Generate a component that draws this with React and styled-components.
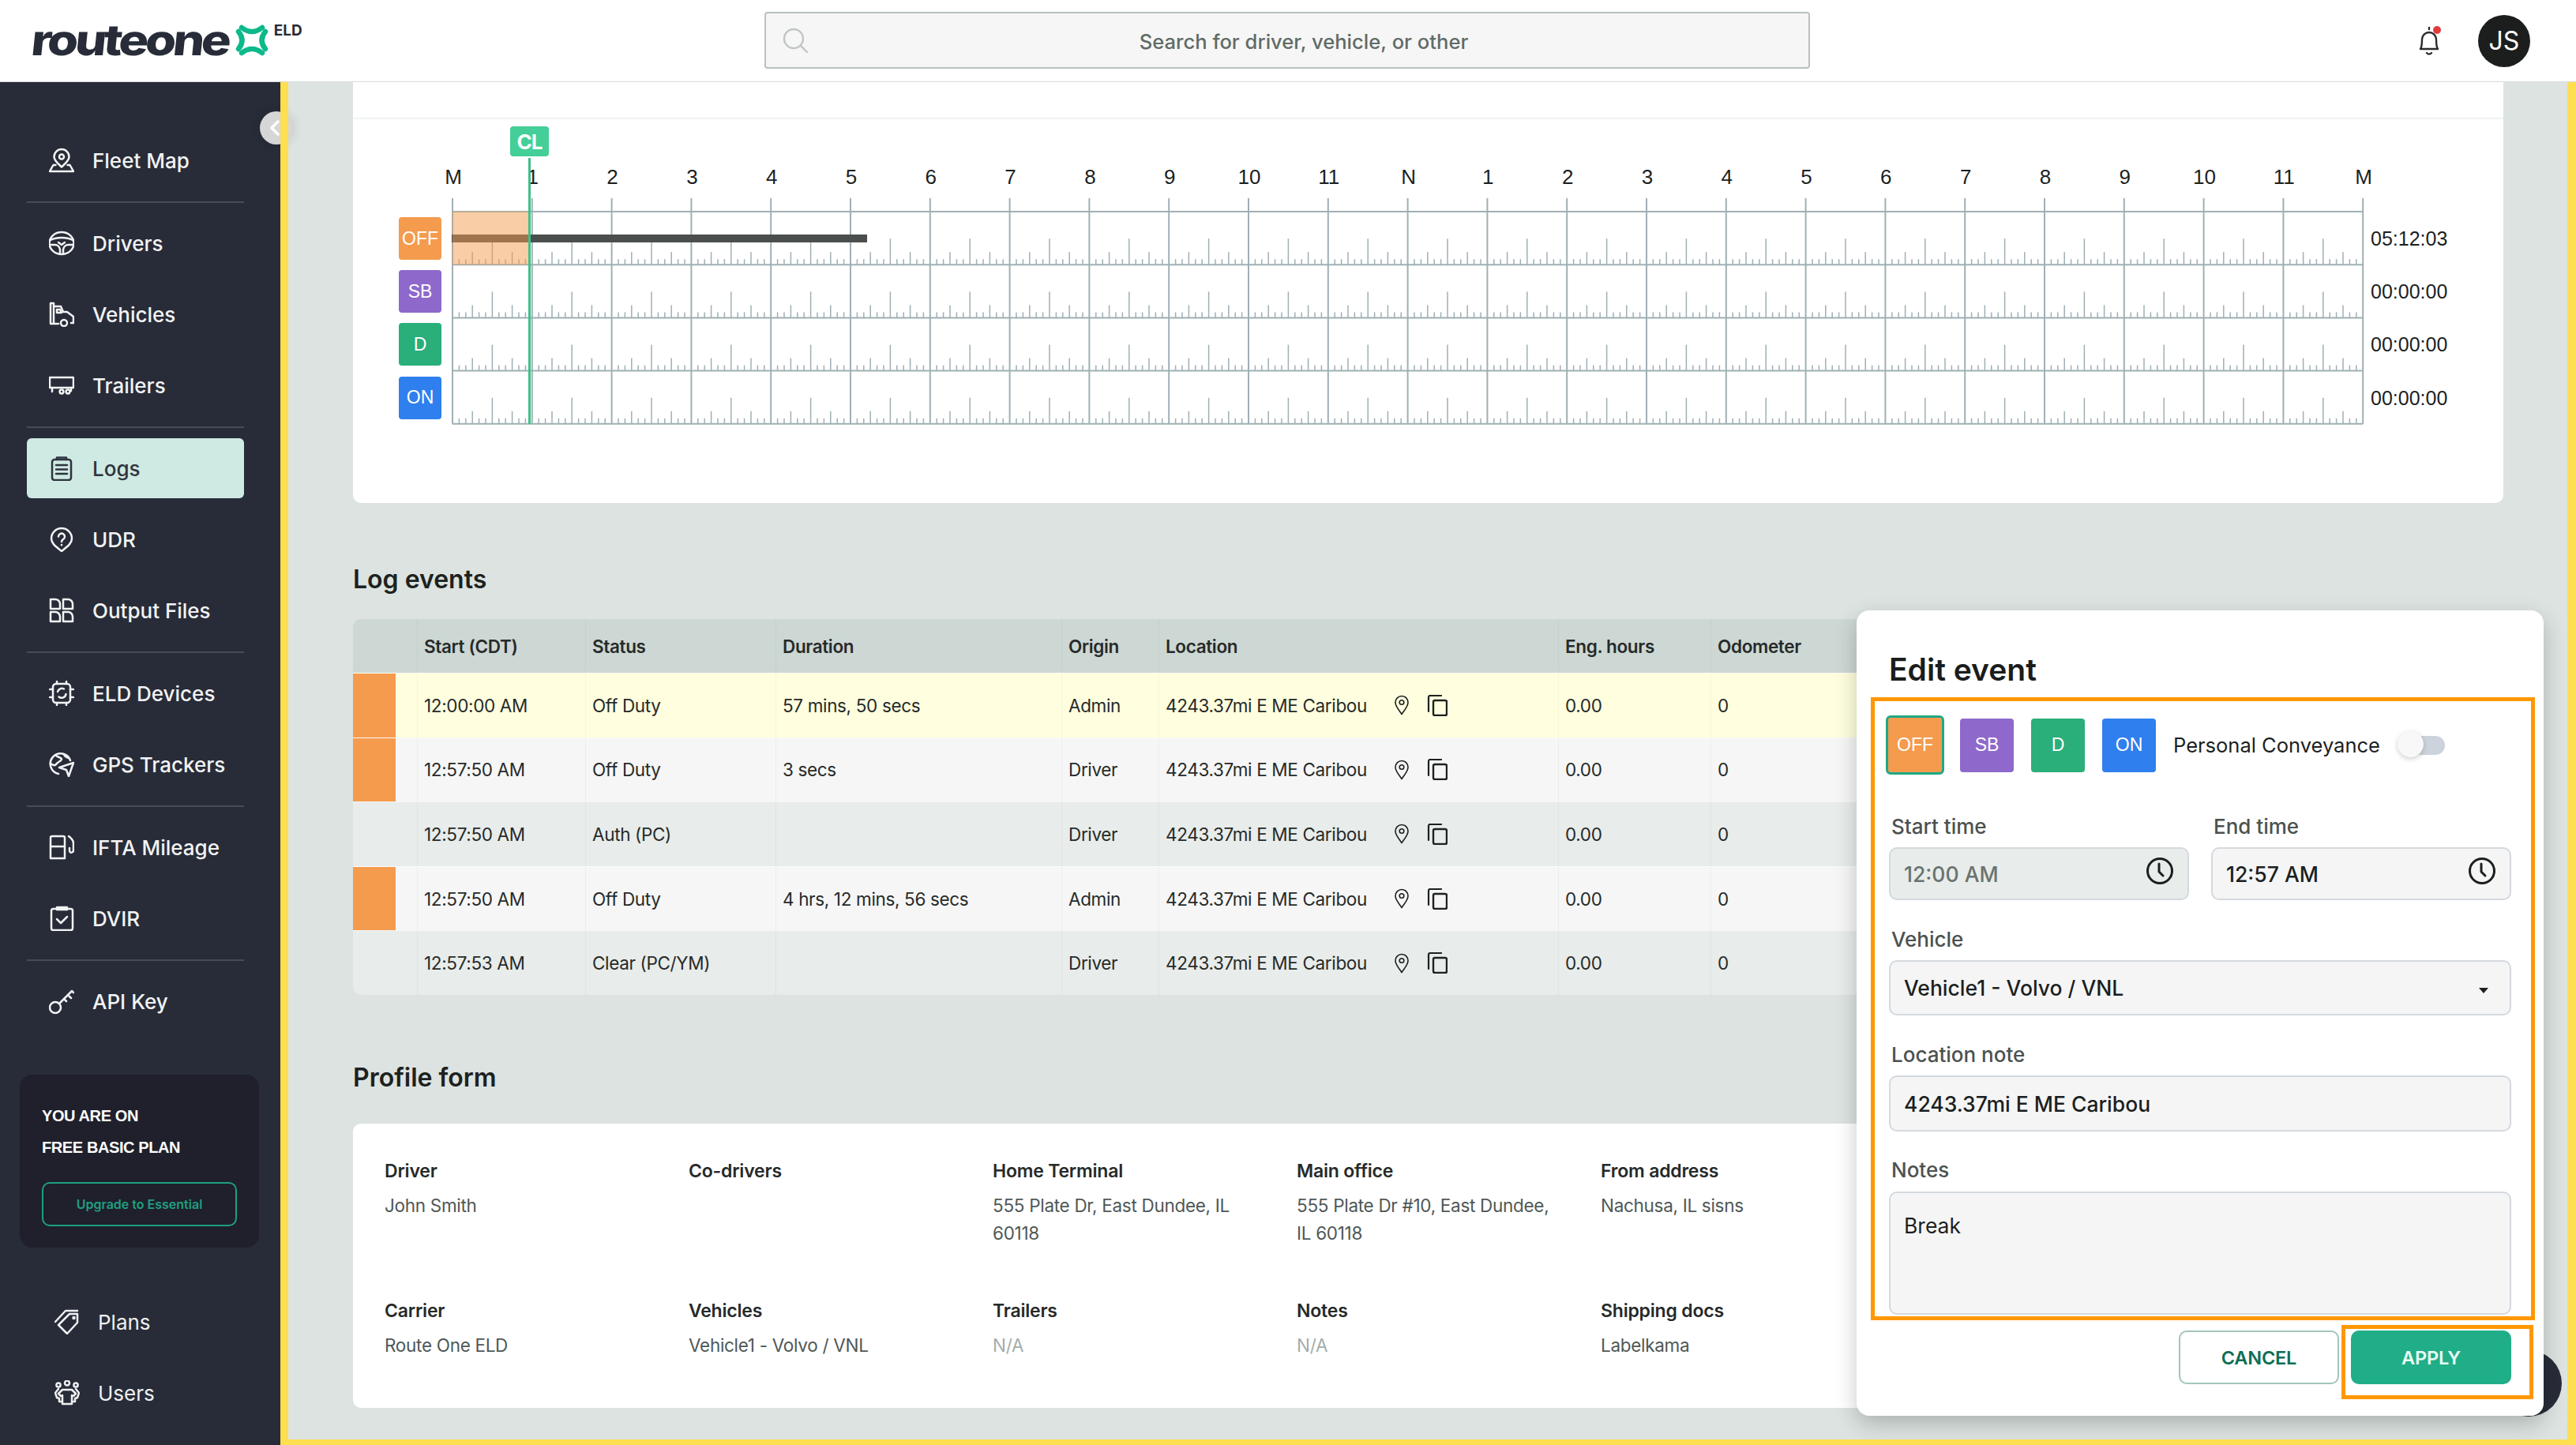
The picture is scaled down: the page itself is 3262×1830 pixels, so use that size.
import React from "react";
import styled, { createGlobalStyle } from "styled-components";

const GlobalStyle = createGlobalStyle`
  html, body { margin: 0; padding: 0; background: #dce3e0; }
  * { box-sizing: border-box; }
  body { font-family: Inter, "Liberation Sans", Arial, sans-serif; color: #1d2120; }
`;

const Page = styled.div`
  position: relative;
  width: 3262px;
  height: 1830px;
  overflow: hidden;
  background: #dce3e0;
`;

/* ---------- top bar ---------- */
const TopBar = styled.header`
  position: relative;
  z-index: 4;
  height: 104px;
  background: #fff;
  display: flex;
  align-items: center;
  border-bottom: 1px solid #d8dcdc;
`;

const Brand = styled.div`
  width: 968px;
  padding-left: 40px;
  display: flex;
  align-items: flex-start;
  height: 100%;
`;

const BrandName = styled.span`
  font-size: 54px;
  font-weight: 800;
  letter-spacing: -3.6px;
  line-height: 104px;
  margin: -1px 36px 0 0;
  color: #282c38;
  display: block;
  transform-origin: left center;
  transform: scaleX(1.17) skewX(-5deg);
`;

const BrandMark = styled.svg`
  width: 42px;
  height: 42px;
  margin: 30px 0 0 9px;
  flex: none;
`;

const BrandTag = styled.span`
  font-size: 19px;
  font-weight: 700;
  margin: 27px 0 0 7px;
  color: #282c38;
`;

const SearchBox = styled.div`
  width: 1324px;
  height: 72px;
  margin-top: -2px;
  background: #f6f6f6;
  border: 2px solid #b7c2be;
  border-radius: 4px;
  display: flex;
  align-items: center;
  padding: 0 20px;
  color: #5f6b67;
`;

const SearchText = styled.span`
  flex: 1;
  padding-left: 8px;
  text-align: center;
  font-size: 25.6px;
  font-weight: 500;
  margin-top: 4px;
`;

const TopActions = styled.div`
  margin-left: auto;
  padding-right: 58px;
  display: flex;
  align-items: center;
  gap: 46px;
`;

const BellWrap = styled.div`
  position: relative;
  width: 32px;
  height: 40px;
`;

const BellDot = styled.span`
  position: absolute;
  top: 1px;
  right: 1px;
  width: 10px;
  height: 10px;
  border-radius: 50%;
  background: #e23b3b;
`;

const Avatar = styled.div`
  width: 66px;
  height: 66px;
  border-radius: 50%;
  background: #1c1e1e;
  color: #fff;
  font-size: 32px;
  font-weight: 400;
  display: flex;
  align-items: center;
  justify-content: center;
`;

/* ---------- sidebar ---------- */
const Layout = styled.div`
  display: flex;
  height: 1726px;
`;

const Sidebar = styled.aside`
  width: 355px;
  flex: none;
  background: #282c38;
  display: flex;
  flex-direction: column;
`;

const Nav = styled.nav`
  display: flex;
  flex-direction: column;
  gap: 14px;
  margin: 61px 46px 0 34px;
`;

const NavItem = styled.div`
  height: 76px;
  display: flex;
  align-items: center;
  gap: 23px;
  padding-left: 28px;
  border-radius: 6px;
  font-size: 26px;
  font-weight: 500;
  color: ${(p) => (p.$active ? "#2f3440" : "#f2f3f4")};
  background: ${(p) => (p.$active ? "#cfeae2" : "transparent")};
`;

const NavRule = styled.div`
  height: 2px;
  margin: -0.5px 0;
  background: #464b5a;
`;

const NavIcon = styled.svg`
  width: 32px;
  height: 32px;
  flex: none;
  fill: none;
  stroke: currentColor;
  stroke-width: 2.5;
  stroke-linecap: round;
  stroke-linejoin: round;
`;

const PlanCard = styled.div`
  margin: 55px 27px 0 25px;
  height: 219px;
  padding: 32px 28px 0;
  border-radius: 16px;
  background: #1f202b;
  color: #fff;
`;

const PlanLine = styled.div`
  font-family: "Liberation Sans", Arial, sans-serif;
  font-size: 20px;
  font-weight: 700;
  line-height: 40px;
  letter-spacing: -0.4px;
`;

const UpgradeButton = styled.div`
  margin-top: 24px;
  height: 56px;
  border: 2px solid #1f9f82;
  border-radius: 10px;
  display: flex;
  align-items: center;
  justify-content: center;
  color: #1f9f82;
  font-size: 16px;
  font-weight: 600;
`;

const BottomNav = styled.div`
  margin-top: 74px;
  display: flex;
  flex-direction: column;
  gap: 50px;
  padding-left: 69px;
`;

const BottomItem = styled.div`
  height: 40px;
  display: flex;
  align-items: center;
  gap: 23px;
  font-size: 26px;
  color: #eef0f1;
`;

const CollapseButton = styled.div`
  position: absolute;
  z-index: 2;
  left: 329px;
  top: 141px;
  width: 42px;
  height: 42px;
  border-radius: 50%;
  background: #d6d6d6;
  box-shadow: 0 0 14px rgba(0, 0, 0, 0.14);
  color: #fff;
  display: flex;
  align-items: center;
  padding-left: 12px;
`;

const HighlightFrame = styled.div`
  position: absolute;
  z-index: 3;
  left: 355px;
  top: 104px;
  right: 0;
  bottom: 0;
  border-style: solid;
  border-color: #fedf4f;
  border-width: 0 11px 7px 10px;
  pointer-events: none;
`;

/* ---------- main column ---------- */
const Main = styled.main`
  flex: 1;
  padding: 0 92px;
  min-width: 0;
`;

const Card = styled.section`
  position: relative;
  background: #fff;
  border-radius: 0 0 10px 10px;
`;

const CardStrip = styled.div`
  height: 47px;
  border-bottom: 2px solid #f1f3f2;
`;

const ChartArea = styled.div`
  padding: 58px 0 98px 58px;
`;

const HourRow = styled.div`
  display: flex;
  margin-left: 18.6px;
  height: 30px;
  font-family: "Liberation Sans", Arial, sans-serif;
  font-size: 26px;
  line-height: 30px;
  color: #1c1f1f;
`;

const HourLabel = styled.span`
  width: 100.8px;
  flex: none;
  text-align: center;
`;

const ChartBody = styled.div`
  display: flex;
  margin-top: 12px;
`;

const BadgeColumn = styled.div`
  display: flex;
  flex-direction: column;
  gap: 13.2px;
  padding-top: 24px;
  width: 66px;
  flex: none;
`;

const StatusBadge = styled.div`
  width: ${(p) => (p.$large ? 68 : 54)}px;
  height: ${(p) => (p.$large ? 68 : 54)}px;
  flex: none;
  border-radius: 4px;
  background: ${(p) => p.$color};
  color: #fff;
  font-family: "Liberation Sans", Arial, sans-serif;
  font-size: 23px;
  display: flex;
  align-items: center;
  justify-content: center;
`;

const GridSvg = styled.svg`
  width: 2424px;
  height: 288px;
  flex: none;
  display: block;
`;

const TotalsColumn = styled.div`
  padding: 18px 0 0 7px;
  font-family: "Liberation Sans", Arial, sans-serif;
  font-size: 25px;
  color: #1c1f1f;
`;

const TotalLine = styled.div`
  height: 67.2px;
  display: flex;
  align-items: center;
`;

const CurrentBadge = styled.div`
  position: absolute;
  left: 199px;
  top: 56px;
  width: 49px;
  height: 38px;
  border-radius: 4px;
  background: #43cf97;
  color: #fff;
  font-size: 26px;
  font-weight: 700;
  letter-spacing: -1px;
  display: flex;
  align-items: center;
  justify-content: center;
`;

const CurrentLine = styled.div`
  position: absolute;
  left: 222px;
  top: 96px;
  width: 3px;
  height: 337px;
  background: #3fc08a;
`;

const SectionTitle = styled.h2`
  margin: ${(p) => p.$top}px 0 ${(p) => p.$bottom}px;
  height: 40px;
  font-size: 32px;
  line-height: 40px;
  font-weight: 600;
  color: #1d2120;
`;

/* ---------- log events table ---------- */
const COLUMNS = "81px 213px 241px 362px 123px 506px 193px 1004px";

const TableWrap = styled.div`
  border-radius: 10px;
  overflow: hidden;
  height: 476px;
`;

const TableRow = styled.div`
  display: grid;
  grid-template-columns: ${COLUMNS};
  height: ${(p) => (p.$head ? 68 : 81.6)}px;
  background: ${(p) => p.$bg};
  font-size: 22.5px;
  font-weight: ${(p) => (p.$head ? 600 : 400)};
  letter-spacing: -0.35px;
  color: #262a29;
  border-top: ${(p) => (p.$head ? "none" : "1px solid rgba(255,255,255,0.5)")};
`;

const Cell = styled.div`
  display: flex;
  align-items: center;
  padding-left: 8px;
  border-left: ${(p) => (p.$plain ? "none" : "1px solid rgba(120, 140, 135, 0.08)")};
  white-space: nowrap;
`;

const StripeCell = styled.div`
  padding-right: 27px;
`;

const Stripe = styled.div`
  height: 100%;
  background: ${(p) => p.$color || "transparent"};
`;

const LocationIcons = styled.span`
  display: flex;
  align-items: center;
  gap: 19px;
  margin-left: 33px;
  color: #1d2120;
`;

const SmallIcon = styled.svg`
  fill: none;
  stroke: currentColor;
  stroke-width: 1.6;
  stroke-linecap: round;
  stroke-linejoin: round;
  flex: none;
`;

const Clock = styled(SmallIcon)`
  stroke-width: 3;
  margin-top: -8px;
  color: #1c1f1f;
`;

/* ---------- profile form ---------- */
const ProfileCard = styled.section`
  height: 360px;
  background: #fff;
  border-radius: 10px;
  padding: 45px 0 0 40px;
  display: grid;
  grid-template-columns: repeat(7, 385px);
  grid-template-rows: 177px 1fr;
`;

const ProfileLabel = styled.div`
  font-size: 23px;
  font-weight: 600;
  line-height: 30px;
  letter-spacing: -0.2px;
  color: #262a29;
`;

const ProfileValue = styled.div`
  margin-top: 11px;
  font-size: 22.5px;
  line-height: 35px;
  letter-spacing: -0.3px;
  color: ${(p) => (p.$muted ? "#a5adab" : "#4f5856")};
`;

/* ---------- edit panel ---------- */
const ChatBubble = styled.div`
  position: absolute;
  left: 3160px;
  top: 1710px;
  width: 84px;
  height: 84px;
  border-radius: 50%;
  background: #282c38;
`;

const EditPanel = styled.aside`
  position: absolute;
  z-index: 2;
  left: 2351px;
  top: 773px;
  width: 870px;
  height: 1020px;
  padding: 55px 41px 0;
  background: #fff;
  border-radius: 16px;
  box-shadow: 0 10px 28px rgba(0, 0, 0, 0.22);
`;

const PanelTitle = styled.h2`
  margin: 0;
  height: 40px;
  font-size: 39px;
  line-height: 40px;
  font-weight: 600;
  color: #1a1d1c;
`;

const StatusRow = styled.div`
  margin: 38px 0 51px -4px;
  height: 75px;
  display: flex;
  align-items: center;
  gap: 22px;
`;

const SelectedStatus = styled.div`
  width: 74px;
  height: 75px;
  margin-right: -2px;
  border: 3px solid #20a885;
  border-radius: 6px;
  background: #f49b4e;
  color: #fff;
  font-family: "Liberation Sans", Arial, sans-serif;
  font-size: 23px;
  display: flex;
  align-items: center;
  justify-content: center;
`;

const ConveyanceLabel = styled.span`
  font-size: 25.5px;
  color: #1c1f1f;
  white-space: nowrap;
`;

const Toggle = styled.div`
  position: relative;
  width: 53px;
  height: 24px;
  margin-left: 7px;
  border-radius: 12px;
  background: #cdd3dc;
`;

const ToggleThumb = styled.span`
  position: absolute;
  left: -7px;
  top: -6px;
  width: 33px;
  height: 33px;
  border-radius: 50%;
  background: #f8f8f8;
  box-shadow: 0 2px 6px rgba(0, 0, 0, 0.2);
`;

const TimeGrid = styled.div`
  display: grid;
  grid-template-columns: 380px 380px;
  column-gap: 28px;
`;

const Field = styled.div`
  margin-bottom: ${(p) => p.$gap ?? 35}px;
`;

const FieldLabel = styled.div`
  height: 30px;
  line-height: 30px;
  margin: 0 0 ${(p) => p.$gap ?? 11}px 3px;
  font-size: 26px;
  font-weight: 500;
  color: #4b5250;
`;

const FieldBox = styled.div`
  height: ${(p) => p.$height || 67}px;
  padding: ${(p) => (p.$area ? "25px 17px 0" : "0 17px")};
  display: flex;
  align-items: ${(p) => (p.$area ? "flex-start" : "center")};
  justify-content: space-between;
  border: 2px solid #d4d9df;
  border-radius: 10px;
  background: ${(p) => (p.$disabled ? "#e8ecea" : "#f5f5f5")};
  color: ${(p) => (p.$disabled ? "#68736f" : "#1c1f1f")};
  font-size: 26.5px;
  font-weight: ${(p) => (p.$area ? 400 : 500)};
`;

const Caret = styled.span`
  width: 0;
  height: 0;
  margin: 6px 10px 0 0;
  border-left: 6px solid transparent;
  border-right: 6px solid transparent;
  border-top: 7px solid #1c1f1f;
`;

const ButtonRow = styled.div`
  display: flex;
  justify-content: flex-end;
  gap: 15px;
`;

const ActionButton = styled.div`
  width: 203px;
  height: 68px;
  border-radius: 10px;
  display: flex;
  align-items: center;
  justify-content: center;
  font-size: 23.5px;
  font-weight: 600;
  letter-spacing: -0.2px;
  border: 2px solid ${(p) => (p.$primary ? "#20ae88" : "#a3c5bb")};
  background: ${(p) => (p.$primary ? "#20ae88" : "#fff")};
  color: ${(p) => (p.$primary ? "#e8fbf4" : "#0d6e55")};
`;

const AnnotationBox = styled.div`
  position: absolute;
  z-index: 3;
  left: ${(p) => p.$x}px;
  top: ${(p) => p.$y}px;
  width: ${(p) => p.$w}px;
  height: ${(p) => p.$h}px;
  border: 5px solid #ff9800;
  pointer-events: none;
`;

/* ---------- data ---------- */
const STATUS = [
  { key: "OFF", color: "#f49b4e" },
  { key: "SB", color: "#8e69cb" },
  { key: "D", color: "#2aae7a" },
  { key: "ON", color: "#2f7fee" },
];
const TOTALS = ["05:12:03", "00:00:00", "00:00:00", "00:00:00"];
const HOURS = ["M", 1, 2, 3, 4, 5, 6, 7, 8, 9, 10, 11, "N", 1, 2, 3, 4, 5, 6, 7, 8, 9, 10, 11, "M"];

const LOCATION = "4243.37mi E ME Caribou";
const EVENTS = [
  { start: "12:00:00 AM", status: "Off Duty", duration: "57 mins, 50 secs", origin: "Admin", bg: "#ffffdf", stripe: "#f49b4e" },
  { start: "12:57:50 AM", status: "Off Duty", duration: "3 secs", origin: "Driver", bg: "#f6f6f6", stripe: "#f49b4e" },
  { start: "12:57:50 AM", status: "Auth (PC)", duration: "", origin: "Driver", bg: "#e8ecea" },
  { start: "12:57:50 AM", status: "Off Duty", duration: "4 hrs, 12 mins, 56 secs", origin: "Admin", bg: "#f6f6f6", stripe: "#f49b4e" },
  { start: "12:57:53 AM", status: "Clear (PC/YM)", duration: "", origin: "Driver", bg: "#e8ecea" },
];

const PROFILE = [
  { label: "Driver", value: ["John Smith"] },
  { label: "Co-drivers", value: [] },
  { label: "Home Terminal", value: ["555 Plate Dr, East Dundee, IL", "60118"] },
  { label: "Main office", value: ["555 Plate Dr #10, East Dundee,", "IL 60118"] },
  { label: "From address", value: ["Nachusa, IL sisns"] },
  null,
  null,
  { label: "Carrier", value: ["Route One ELD"] },
  { label: "Vehicles", value: ["Vehicle1 - Volvo / VNL"] },
  { label: "Trailers", value: ["N/A"], muted: true },
  { label: "Notes", value: ["N/A"], muted: true },
  { label: "Shipping docs", value: ["Labelkama"] },
];

/* ---------- icons ---------- */
const icons = {
  map: (
    <>
      <path d="M16 2a9.5 9.5 0 0 1 9.5 9.5c0 5-5 8.500-9.500 13-4.500-4.500-9.500-8-9.500-13A9.500 9.500 0 0 1 16 2z" />
      <circle cx="16" cy="11.500" r="3" />
      <path d="M8.500 22H5.500L1 30h30l-4.500-8h-3" />
    </>
  ),
  wheel: (
    <>
      <ellipse cx="16" cy="16" rx="15.500" ry="14" />
      <path d="M2 12c5-2.500 9-3 14-3s9 .5 14 3" />
      <path d="M1.500 18h6c3.500 0 6 3 6.500 6v5.500M30.500 18h-6c-3.500 0-6 3-6.500 6v5.500" />
      <path d="M12 15l4 3 4-3" />
    </>
  ),
  truck: (
    <>
      <path d="M2 2h4v26M2 2v26h10" />
      <path d="M6 6h9l3 7h5l8 6v8h-3" />
      <path d="M10 10h4l2 4h-6z" />
      <circle cx="19" cy="27" r="4" />
    </>
  ),
  trailer: (
    <>
      <path d="M1 6h30v13H1z" />
      <path d="M4 19v5M28 19v4" />
      <circle cx="16" cy="24" r="2.400" />
      <circle cx="24" cy="24" r="2.400" />
    </>
  ),
  logs: (
    <>
      <rect x="4" y="5" width="24" height="26" rx="3" />
      <path d="M10 5V2.500h12V5" />
      <path d="M9 12h14M9 17.500h14M9 23h14" />
    </>
  ),
  udr: (
    <>
      <path d="M16 2a13 13 0 0 1 13 13c0 7-7 11-13 16C10 26 3 22 3 15A13 13 0 0 1 16 2z" />
      <path d="M12 12.500a4 4 0 1 1 6 3.500c-1.300.8-2 1.500-2 3" />
      <path d="M16 23v.2" />
    </>
  ),
  files: (
    <>
      <path d="M2 2h6a6 6 0 0 1 6 6v6H2zM18 2h6a6 6 0 0 1 6 6v6H18zM2 18h6a6 6 0 0 1 6 6v6H2zM18 18h6a6 6 0 0 1 6 6v6H18z" />
    </>
  ),
  chip: (
    <>
      <rect x="5" y="4" width="22" height="24" rx="4" />
      <path d="M10 1v3M22 1v3M10 28v3M22 28v3M1 11h4M1 21h4M27 11h4M27 21h4" />
      <path d="M11 14a5.500 5.500 0 0 1 8-3.500M21.500 17a5.500 5.500 0 0 1-9 3.500" />
    </>
  ),
  gps: (
    <>
      <path d="M12 28A13 13 0 1 1 27 11" />
      <path d="M8 4c2 3 7 3 8 5s-5 4-7 7-5 0-7-1M19 3c0 3 3 4 6 5" />
      <path d="M31 14l-18 6 9 3 3 8z" />
    </>
  ),
  fuel: (
    <>
      <path d="M2 30V4a2 2 0 0 1 2-2h14a2 2 0 0 1 2 2v26zM2 15h18" />
      <path d="M25 2c4 3 6 5 6 9v9c0 3-5 4-5 0v-3" />
    </>
  ),
  check: (
    <>
      <rect x="3" y="4" width="27" height="27" rx="2.500" />
      <path d="M10 3v-1h13v3H10z" />
      <path d="M10 17l5 5 8-8" />
    </>
  ),
  key: (
    <>
      <circle cx="8" cy="24" r="7" />
      <path d="M13 19L29 3M24 8l4 4M19 13l3 3M29 3l2 2" />
    </>
  ),
  plans: (
    <>
      <path d="M19 6h10v11L16 31 5 20z" />
      <circle cx="24.500" cy="11" r="1" />
      <path d="M1 16L14 2h15" />
    </>
  ),
  users: (
    <>
      <circle cx="16" cy="3.500" r="3" />
      <circle cx="5" cy="6" r="2.600" />
      <circle cx="27" cy="6" r="2.600" />
      <path d="M10 12h12l5 5-3 3-2-1v11H10V19l-2 1-3-3z" />
      <path d="M5 11l-4 5 2 6 3 1v4h2M27 11l4 5-2 6-3 1v4h-2" />
    </>
  ),
};

const Glyph = ({ name }) => <NavIcon viewBox="0 0 32 32">{icons[name]}</NavIcon>;

const PinIcon = () => (
  <SmallIcon width="22" height="26" viewBox="0 0 22 26">
    <path d="M11 1.500a8 8 0 0 1 8 8c0 5.500-5 10-8 15-3-5-8-9.500-8-15a8 8 0 0 1 8-8z" />
    <circle cx="11" cy="9.500" r="2.800" />
  </SmallIcon>
);

const CopyIcon = () => (
  <SmallIcon width="28" height="27" viewBox="0 0 28 27">
    <rect x="10" y="7" width="17" height="19" rx="2" strokeWidth="2.400" />
    <path d="M4 21V3a2 2 0 0 1 2-2h14" strokeWidth="2.200" />
  </SmallIcon>
);

const ClockIcon = () => (
  <Clock width="36" height="36" viewBox="0 0 36 36">
    <circle cx="18" cy="18" r="15.500" />
    <path d="M17 9v10l5 5" />
  </Clock>
);

const NAV_GROUPS = [
  [{ label: "Fleet Map", icon: "map" }],
  [
    { label: "Drivers", icon: "wheel" },
    { label: "Vehicles", icon: "truck" },
    { label: "Trailers", icon: "trailer" },
  ],
  [
    { label: "Logs", icon: "logs", active: true },
    { label: "UDR", icon: "udr" },
    { label: "Output Files", icon: "files" },
  ],
  [
    { label: "ELD Devices", icon: "chip" },
    { label: "GPS Trackers", icon: "gps" },
  ],
  [
    { label: "IFTA Mileage", icon: "fuel" },
    { label: "DVIR", icon: "check" },
  ],
  [{ label: "API Key", icon: "key" }],
];

/* ---------- chart ---------- */
const HOUR_W = 100.8;
const X0 = 2;
const ROW_H = 67.2;
const Y0 = 17;
const GRID = "#9fb0b4";

const LogGrid = () => {
  const lines = [];
  for (let h = 0; h <= 24; h++) {
    const x = X0 + h * HOUR_W;
    lines.push(<line key={`h${h}`} x1={x} x2={x} y1={0} y2={Y0 + ROW_H * 4} stroke={GRID} strokeWidth="2" />);
  }
  for (let r = 0; r <= 4; r++) {
    const y = Y0 + r * ROW_H;
    lines.push(<line key={`r${r}`} x1={X0} x2={X0 + 24 * HOUR_W} y1={y} y2={y} stroke={GRID} strokeWidth="2" />);
  }
  for (let r = 1; r <= 4; r++) {
    const base = Y0 + r * ROW_H;
    for (let h = 0; h < 24; h++) {
      for (let t = 1; t < 12; t++) {
        const size = t === 6 ? 33 : t % 3 === 0 ? 16 : 7;
        const x = X0 + (h + t / 12) * HOUR_W;
        lines.push(<line key={`t${r}-${h}-${t}`} x1={x} x2={x} y1={base - size} y2={base} stroke={GRID} strokeWidth="1.500" />);
      }
    }
  }
  return (
    <GridSvg viewBox="0 0 2424 288">
      {lines}
      <rect x={1} y={46} width={526} height={10} fill="#4a4f4d" />
      <rect x={X0} y={Y0} width={98} height={ROW_H} fill="#f49b4e" fillOpacity="0.5" />
    </GridSvg>
  );
};

export default function App() {
  return (
    <Page>
      <GlobalStyle />
      <TopBar>
        <Brand>
          <BrandName>routeone</BrandName>
          <BrandMark viewBox="0 0 42 42" fill="none" stroke="#0bb98a" strokeWidth="6.500" strokeLinecap="round">
            <path d="M8 5Q21 15 34 5" />
            <path d="M8 37Q21 27 34 37" />
            <path d="M4 10Q13 21 4 32" />
            <path d="M38 10Q29 21 38 32" />
          </BrandMark>
          <BrandTag>ELD</BrandTag>
        </Brand>
        <SearchBox>
          <svg width="34" height="34" viewBox="0 0 34 34" fill="none" stroke="#bfc5c3" strokeWidth="2.400" strokeLinecap="round">
            <circle cx="15" cy="15" r="12" />
            <path d="M24 24l8 8" />
          </svg>
          <SearchText>Search for driver, vehicle, or other</SearchText>
        </SearchBox>
        <TopActions>
          <BellWrap>
            <svg width="32" height="40" viewBox="0 0 32 40" fill="none" stroke="#2a2d2d" strokeWidth="2.400" strokeLinecap="round" strokeLinejoin="round">
              <path d="M5 30c2-3 2-6 2-12a9 9 0 0 1 18 0c0 6 0 9 2 12z" />
              <path d="M13 35c1 2 5 2 6 0M16 5V3" />
            </svg>
            <BellDot />
          </BellWrap>
          <Avatar>JS</Avatar>
        </TopActions>
      </TopBar>

      <Layout>
        <Sidebar>
          <Nav>
            {NAV_GROUPS.map((group, i) => (
              <React.Fragment key={i}>
                {i > 0 ? <NavRule /> : null}
                {group.map((item) => (
                  <NavItem key={item.label} $active={item.active}>
                    <Glyph name={item.icon} />
                    {item.label}
                  </NavItem>
                ))}
              </React.Fragment>
            ))}
          </Nav>
          <PlanCard>
            <PlanLine>YOU ARE ON</PlanLine>
            <PlanLine>FREE BASIC PLAN</PlanLine>
            <UpgradeButton>Upgrade to Essential</UpgradeButton>
          </PlanCard>
          <BottomNav>
            <BottomItem>
              <Glyph name="plans" />
              Plans
            </BottomItem>
            <BottomItem>
              <Glyph name="users" />
              Users
            </BottomItem>
          </BottomNav>
        </Sidebar>

        <Main>
          <Card>
            <CardStrip />
            <ChartArea>
              <HourRow>
                {HOURS.map((h, i) => (
                  <HourLabel key={i}>{h}</HourLabel>
                ))}
              </HourRow>
              <ChartBody>
                <BadgeColumn>
                  {STATUS.map((s) => (
                    <StatusBadge key={s.key} $color={s.color}>
                      {s.key}
                    </StatusBadge>
                  ))}
                </BadgeColumn>
                <LogGrid />
                <TotalsColumn>
                  {TOTALS.map((t, i) => (
                    <TotalLine key={i}>{t}</TotalLine>
                  ))}
                </TotalsColumn>
              </ChartBody>
            </ChartArea>
            <CurrentLine />
            <CurrentBadge>CL</CurrentBadge>
          </Card>

          <SectionTitle $top={77} $bottom={30}>Log events</SectionTitle>
          <TableWrap>
            <TableRow $head $bg="#cdd7d4">
              <Cell $plain />
              <Cell>Start (CDT)</Cell>
              <Cell>Status</Cell>
              <Cell>Duration</Cell>
              <Cell>Origin</Cell>
              <Cell>Location</Cell>
              <Cell>Eng. hours</Cell>
              <Cell>Odometer</Cell>
            </TableRow>
            {EVENTS.map((e, i) => (
              <TableRow key={i} $bg={e.bg}>
                <StripeCell>
                  <Stripe $color={e.stripe} />
                </StripeCell>
                <Cell>{e.start}</Cell>
                <Cell>{e.status}</Cell>
                <Cell>{e.duration}</Cell>
                <Cell>{e.origin}</Cell>
                <Cell>
                  {LOCATION}
                  <LocationIcons>
                    <PinIcon />
                    <CopyIcon />
                  </LocationIcons>
                </Cell>
                <Cell>0.00</Cell>
                <Cell>0</Cell>
              </TableRow>
            ))}
          </TableWrap>

          <SectionTitle $top={85} $bottom={38}>Profile form</SectionTitle>
          <ProfileCard>
            {PROFILE.map((p, i) =>
              p ? (
                <div key={i}>
                  <ProfileLabel>{p.label}</ProfileLabel>
                  <ProfileValue $muted={p.muted}>
                    {p.value.map((line) => (
                      <div key={line}>{line}</div>
                    ))}
                  </ProfileValue>
                </div>
              ) : (
                <div key={i} />
              )
            )}
          </ProfileCard>
        </Main>
      </Layout>

      <CollapseButton>
        <svg width="14" height="22" viewBox="0 0 14 22" fill="none" stroke="#fff" strokeWidth="3.500" strokeLinecap="round" strokeLinejoin="round">
          <path d="M11 3L3 11l8 8" />
        </svg>
      </CollapseButton>
      <HighlightFrame />
      <ChatBubble />

      <EditPanel>
        <PanelTitle>Edit event</PanelTitle>
        <StatusRow>
          <SelectedStatus>OFF</SelectedStatus>
          {STATUS.slice(1).map((s) => (
            <StatusBadge key={s.key} $large $color={s.color}>
              {s.key}
            </StatusBadge>
          ))}
          <ConveyanceLabel>Personal Conveyance</ConveyanceLabel>
          <Toggle>
            <ToggleThumb />
          </Toggle>
        </StatusRow>
        <TimeGrid>
          <Field>
            <FieldLabel>Start time</FieldLabel>
            <FieldBox $disabled>
              12:00 AM
              <ClockIcon />
            </FieldBox>
          </Field>
          <Field>
            <FieldLabel>End time</FieldLabel>
            <FieldBox>
              12:57 AM
              <ClockIcon />
            </FieldBox>
          </Field>
        </TimeGrid>
        <Field>
          <FieldLabel>Vehicle</FieldLabel>
          <FieldBox $height={70}>
            Vehicle1 - Volvo / VNL
            <Caret />
          </FieldBox>
        </Field>
        <Field $gap={34}>
          <FieldLabel>Location note</FieldLabel>
          <FieldBox $height={71}>{LOCATION}</FieldBox>
        </Field>
        <Field $gap={20}>
          <FieldLabel $gap={12}>Notes</FieldLabel>
          <FieldBox $area $height={156}>Break</FieldBox>
        </Field>
        <ButtonRow>
          <ActionButton>CANCEL</ActionButton>
          <ActionButton $primary>APPLY</ActionButton>
        </ButtonRow>
      </EditPanel>
      <AnnotationBox $x={2369} $y={883} $w={841} $h={789} />
      <AnnotationBox $x={2965} $y={1678} $w={243} $h={94} />
    </Page>
  );
}
